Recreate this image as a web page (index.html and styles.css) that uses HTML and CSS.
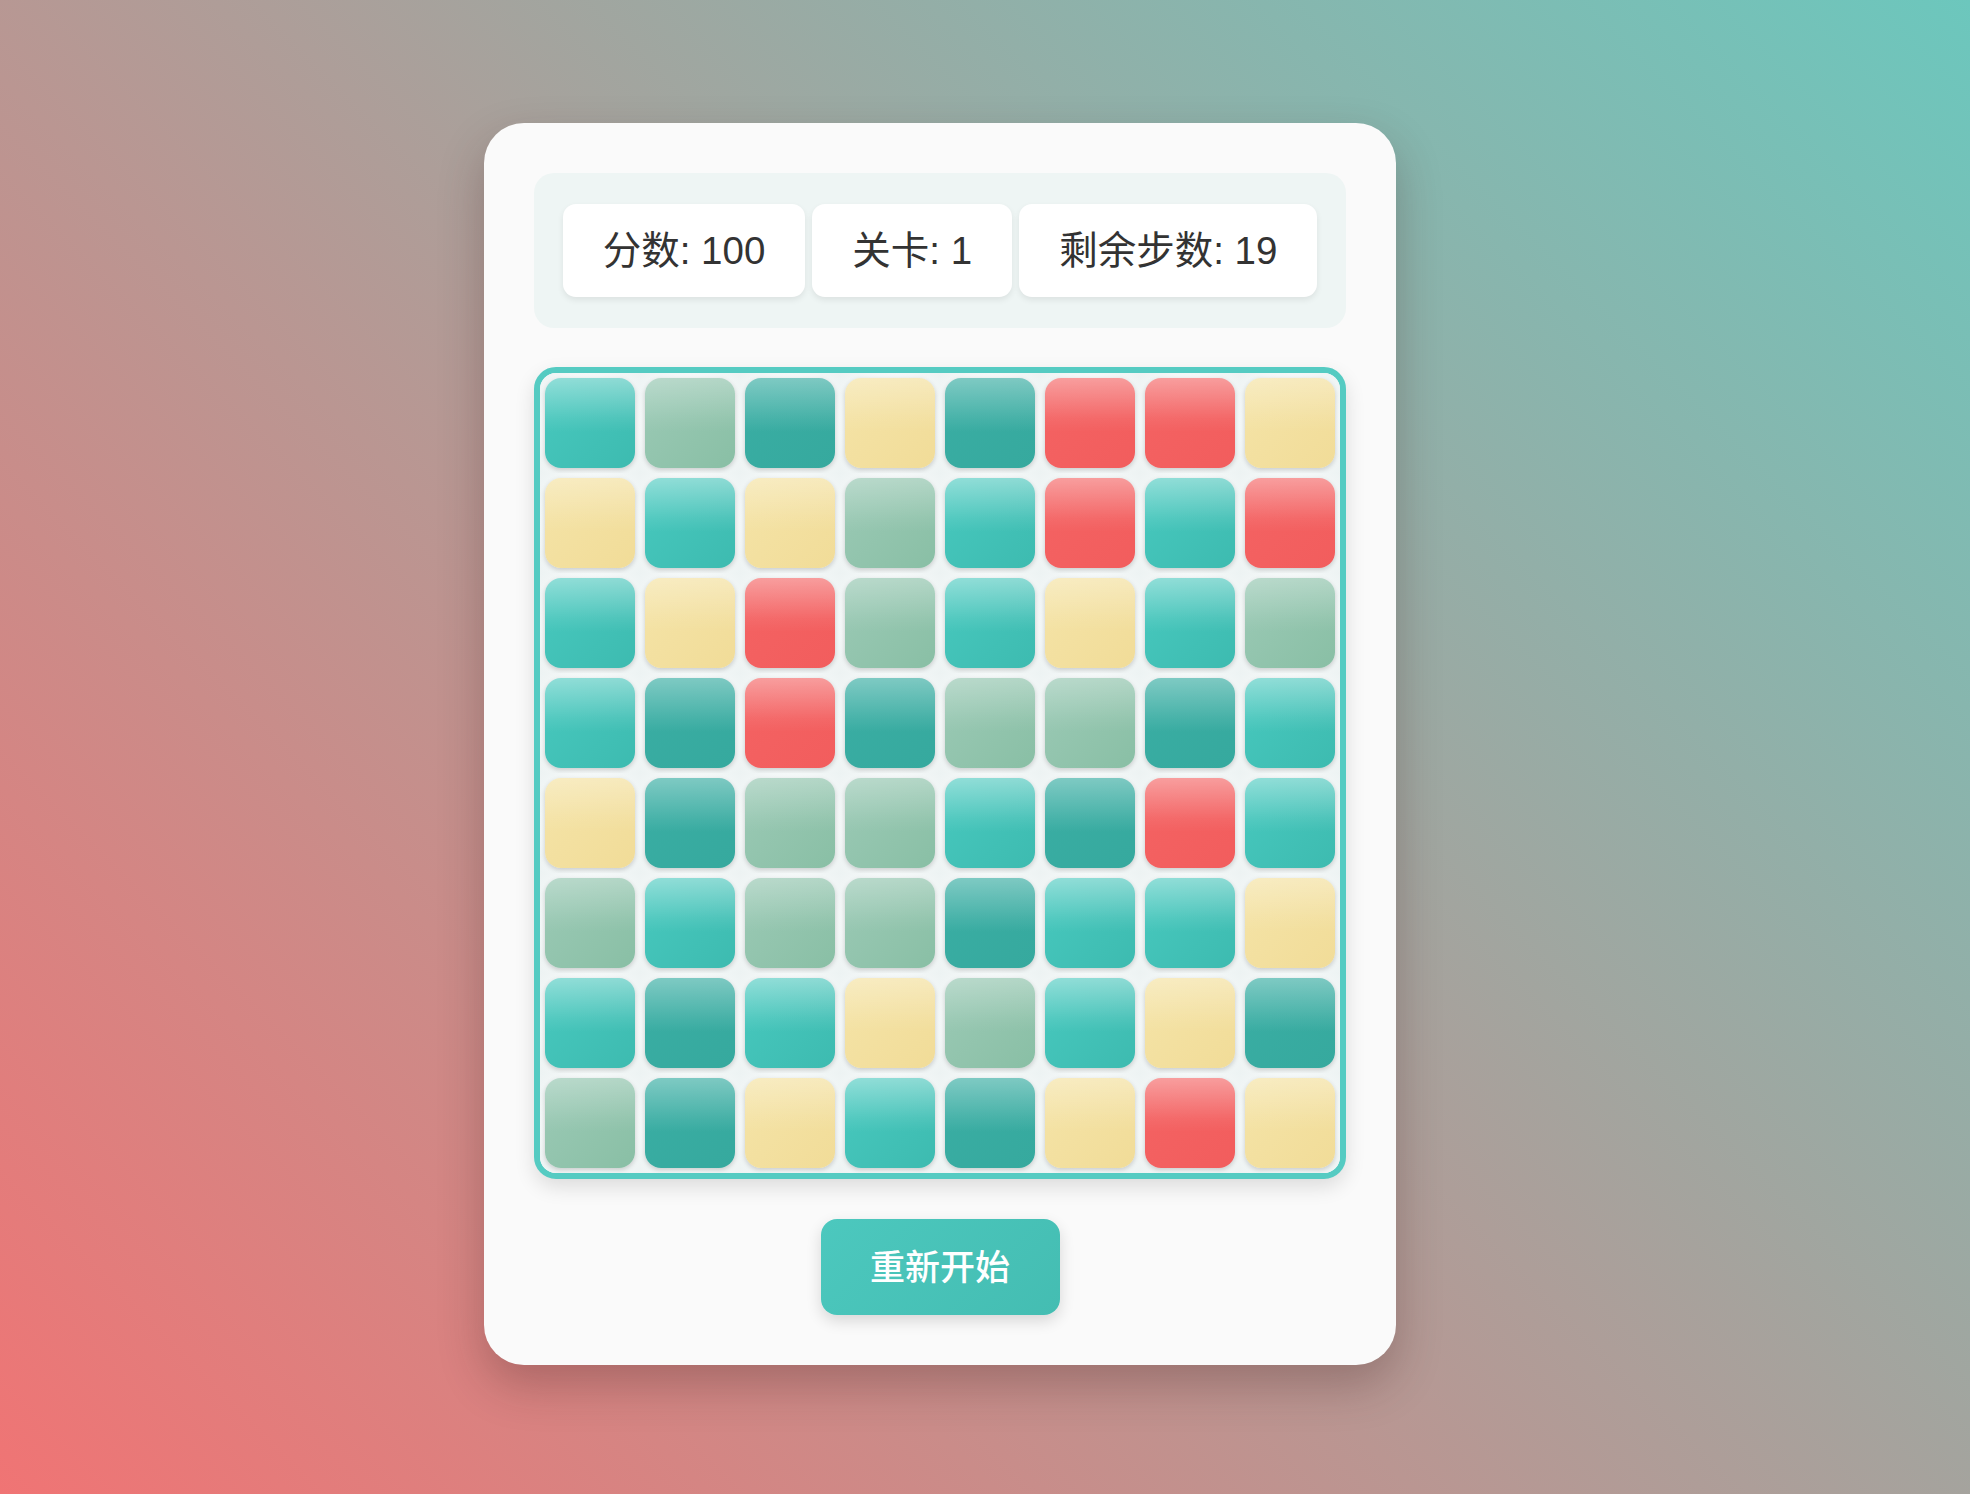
FILE: index.html
```html
<!DOCTYPE html>
<html lang="zh-CN">
<head>
<meta charset="utf-8">
<title>消消乐</title>
<link rel="stylesheet" href="styles.css">
</head>
<body>
<div class="game">
  <div class="stats">
    <div class="stat">分数: 100</div>
    <div class="stat">关卡: 1</div>
    <div class="stat">剩余步数: 19</div>
  </div>
  <div class="board">
    <div class="cell"><div class="tile t"></div></div>
    <div class="cell"><div class="tile s"></div></div>
    <div class="cell"><div class="tile d"></div></div>
    <div class="cell"><div class="tile y"></div></div>
    <div class="cell"><div class="tile d"></div></div>
    <div class="cell"><div class="tile r"></div></div>
    <div class="cell"><div class="tile r"></div></div>
    <div class="cell"><div class="tile y"></div></div>

    <div class="cell"><div class="tile y"></div></div>
    <div class="cell"><div class="tile t"></div></div>
    <div class="cell"><div class="tile y"></div></div>
    <div class="cell"><div class="tile s"></div></div>
    <div class="cell"><div class="tile t"></div></div>
    <div class="cell"><div class="tile r"></div></div>
    <div class="cell"><div class="tile t"></div></div>
    <div class="cell"><div class="tile r"></div></div>

    <div class="cell"><div class="tile t"></div></div>
    <div class="cell"><div class="tile y"></div></div>
    <div class="cell"><div class="tile r"></div></div>
    <div class="cell"><div class="tile s"></div></div>
    <div class="cell"><div class="tile t"></div></div>
    <div class="cell"><div class="tile y"></div></div>
    <div class="cell"><div class="tile t"></div></div>
    <div class="cell"><div class="tile s"></div></div>

    <div class="cell"><div class="tile t"></div></div>
    <div class="cell"><div class="tile d"></div></div>
    <div class="cell"><div class="tile r"></div></div>
    <div class="cell"><div class="tile d"></div></div>
    <div class="cell"><div class="tile s"></div></div>
    <div class="cell"><div class="tile s"></div></div>
    <div class="cell"><div class="tile d"></div></div>
    <div class="cell"><div class="tile t"></div></div>

    <div class="cell"><div class="tile y"></div></div>
    <div class="cell"><div class="tile d"></div></div>
    <div class="cell"><div class="tile s"></div></div>
    <div class="cell"><div class="tile s"></div></div>
    <div class="cell"><div class="tile t"></div></div>
    <div class="cell"><div class="tile d"></div></div>
    <div class="cell"><div class="tile r"></div></div>
    <div class="cell"><div class="tile t"></div></div>

    <div class="cell"><div class="tile s"></div></div>
    <div class="cell"><div class="tile t"></div></div>
    <div class="cell"><div class="tile s"></div></div>
    <div class="cell"><div class="tile s"></div></div>
    <div class="cell"><div class="tile d"></div></div>
    <div class="cell"><div class="tile t"></div></div>
    <div class="cell"><div class="tile t"></div></div>
    <div class="cell"><div class="tile y"></div></div>

    <div class="cell"><div class="tile t"></div></div>
    <div class="cell"><div class="tile d"></div></div>
    <div class="cell"><div class="tile t"></div></div>
    <div class="cell"><div class="tile y"></div></div>
    <div class="cell"><div class="tile s"></div></div>
    <div class="cell"><div class="tile t"></div></div>
    <div class="cell"><div class="tile y"></div></div>
    <div class="cell"><div class="tile d"></div></div>

    <div class="cell"><div class="tile s"></div></div>
    <div class="cell"><div class="tile d"></div></div>
    <div class="cell"><div class="tile y"></div></div>
    <div class="cell"><div class="tile t"></div></div>
    <div class="cell"><div class="tile d"></div></div>
    <div class="cell"><div class="tile y"></div></div>
    <div class="cell"><div class="tile r"></div></div>
    <div class="cell"><div class="tile y"></div></div>
  </div>
  <div class="actions">
    <button class="restart">重新开始</button>
  </div>
</div>
</body>
</html>
```

FILE: styles.css
```css
html, body {
  margin: 0;
  padding: 0;
}

body {
  min-height: 100vh;
  box-sizing: border-box;
  display: flex;
  align-items: center;
  justify-content: center;
  padding-right: 90px;
  padding-bottom: 6px;
  background: linear-gradient(45deg, #f07474 0%, #6cc7bd 100%);
  font-family: "Liberation Sans", "Noto Sans CJK SC", sans-serif;
}

.game {
  width: 912px;
  box-sizing: border-box;
  padding: 50px;
  background: #fafafa;
  border-radius: 40px;
  box-shadow: 0 20px 45px rgba(60, 30, 30, 0.28);
  display: flex;
  flex-direction: column;
}

.stats {
  display: flex;
  justify-content: center;
  gap: 7px;
  padding: 31px 30px;
  background: #eef5f4;
  border-radius: 20px;
  margin-bottom: 39px;
}

.stat {
  background: #ffffff;
  border-radius: 13px;
  padding: 20px 40px;
  line-height: 53px;
  font-size: 38.5px;
  color: #333333;
  white-space: nowrap;
  box-shadow: 0 3px 6px rgba(0, 0, 0, 0.08);
}

.board {
  width: 812px;
  height: 812px;
  box-sizing: border-box;
  border: 6px solid #55cbc2;
  border-radius: 22px;
  background: #f1f6f6;
  display: grid;
  grid-template-columns: repeat(8, 100px);
  grid-template-rows: repeat(8, 100px);
  overflow: hidden;
  box-shadow: 0 8px 20px rgba(0, 0, 0, 0.12);
}

.cell {
  display: flex;
  align-items: center;
  justify-content: center;
  background: radial-gradient(circle at 50% 50%, #f7fafa 55%, #edf3f3 100%);
}

.tile {
  width: 90px;
  height: 90px;
  border-radius: 16px;
  box-shadow: 0 2px 5px rgba(0, 0, 0, 0.18);
}

.t {
  background:
    linear-gradient(to bottom, rgba(255, 255, 255, 0.4) 0%, rgba(255, 255, 255, 0.08) 45%, rgba(255, 255, 255, 0) 60%),
    linear-gradient(135deg, #48c9bf, #3dbbb0);
}

.d {
  background:
    linear-gradient(to bottom, rgba(255, 255, 255, 0.35) 0%, rgba(255, 255, 255, 0.08) 45%, rgba(255, 255, 255, 0) 60%),
    linear-gradient(135deg, #3aaea4, #36a99e);
}

.s {
  background:
    linear-gradient(to bottom, rgba(255, 255, 255, 0.3) 0%, rgba(255, 255, 255, 0.06) 45%, rgba(255, 255, 255, 0) 60%),
    linear-gradient(135deg, #9ccab6, #89bfa5);
}

.y {
  background:
    linear-gradient(to bottom, rgba(255, 255, 255, 0.3) 0%, rgba(255, 255, 255, 0.06) 45%, rgba(255, 255, 255, 0) 60%),
    linear-gradient(135deg, #f5e4a8, #f1dc98);
}

.r {
  background:
    linear-gradient(to bottom, rgba(255, 255, 255, 0.38) 0%, rgba(255, 255, 255, 0.06) 45%, rgba(255, 255, 255, 0) 60%),
    linear-gradient(135deg, #f46363, #f25d5d);
}

.actions {
  display: flex;
  justify-content: center;
  margin-top: 40px;
}

.restart {
  border: none;
  width: 239px;
  height: 96px;
  border-radius: 16px;
  background: linear-gradient(135deg, #4cc8be, #44bdb2);
  color: #ffffff;
  font-family: "Noto Sans CJK SC", sans-serif;
  font-weight: 500;
  font-size: 35px;
  box-shadow: 0 6px 15px rgba(0, 0, 0, 0.14);
  padding: 0 0 5px 0;
}
```
